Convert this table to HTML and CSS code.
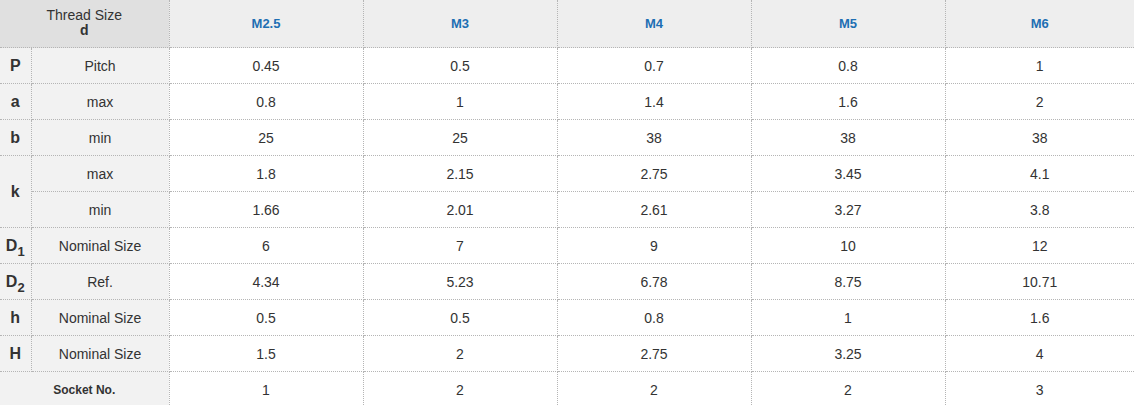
FILE: index.html
```html
<!DOCTYPE html>
<html>
<head>
<meta charset="utf-8">
<link rel="stylesheet" href="styles.css">
</head>
<body>
<table class="spec">
  <colgroup>
    <col class="c-sym"><col class="c-lbl">
    <col class="c-v"><col class="c-v"><col class="c-v"><col class="c-v"><col class="c-last">
  </colgroup>
  <thead>
    <tr>
      <th colspan="2" class="corner">Thread Size<br><b>d</b></th>
      <th class="size">M2.5</th><th class="size">M3</th><th class="size">M4</th><th class="size">M5</th><th class="size">M6</th>
    </tr>
  </thead>
  <tbody>
    <tr><td class="sym">P</td><td class="lbl">Pitch</td><td>0.45</td><td>0.5</td><td>0.7</td><td>0.8</td><td>1</td></tr>
    <tr><td class="sym">a</td><td class="lbl">max</td><td>0.8</td><td>1</td><td>1.4</td><td>1.6</td><td>2</td></tr>
    <tr><td class="sym">b</td><td class="lbl">min</td><td>25</td><td>25</td><td>38</td><td>38</td><td>38</td></tr>
    <tr><td class="sym" rowspan="2">k</td><td class="lbl">max</td><td>1.8</td><td>2.15</td><td>2.75</td><td>3.45</td><td>4.1</td></tr>
    <tr><td class="lbl">min</td><td>1.66</td><td>2.01</td><td>2.61</td><td>3.27</td><td>3.8</td></tr>
    <tr><td class="sym">D<sub>1</sub></td><td class="lbl">Nominal Size</td><td>6</td><td>7</td><td>9</td><td>10</td><td>12</td></tr>
    <tr><td class="sym">D<sub>2</sub></td><td class="lbl">Ref.</td><td>4.34</td><td>5.23</td><td>6.78</td><td>8.75</td><td>10.71</td></tr>
    <tr><td class="sym">h</td><td class="lbl">Nominal Size</td><td>0.5</td><td>0.5</td><td>0.8</td><td>1</td><td>1.6</td></tr>
    <tr><td class="sym">H</td><td class="lbl">Nominal Size</td><td>1.5</td><td>2</td><td>2.75</td><td>3.25</td><td>4</td></tr>
    <tr><td class="lbl socket" colspan="2">Socket No.</td><td>1</td><td>2</td><td>2</td><td>2</td><td>3</td></tr>
  </tbody>
</table>
</body>
</html>
```

FILE: styles.css
```css
html, body {
  margin: 0;
  padding: 0;
  background: #fff;
}
.spec {
  border-collapse: collapse;
  table-layout: fixed;
  width: 1134px;
  font-family: "Liberation Sans", Arial, sans-serif;
  font-size: 14px;
  color: #333;
}
.c-sym { width: 31px; }
.c-lbl { width: 138px; }
.c-v { width: 194px; }
.c-last { width: 189px; }
.spec th, .spec td {
  border: 1px dotted #b5b5b5;
  text-align: center;
  vertical-align: middle;
  padding: 0;
  height: 35px;
  line-height: 16px;
}
.spec tr:first-child th { border-top: none; }
.spec tr th:first-child, .spec tr td:first-child { border-left: none; }
.spec tr th:last-child, .spec tr td:last-child { border-right: none; }
.spec tbody tr:last-child td { border-bottom: none; }
.spec thead th {
  height: 47px;
  background: #eeeeee;
  font-weight: normal;
}
.spec th.corner {
  background: #e0e0e0;
  font-size: 14px;
  line-height: 15px;
  height: 45px;
  padding-bottom: 2px;
}
.spec th.size {
  color: #1d6fb3;
  font-weight: bold;
  font-size: 13px;
}
.spec td.sym {
  background: #f2f2f2;
  font-weight: bold;
  font-size: 16px;
  color: #333;
}
.spec td.sym sub {
  font-size: 13px;
  vertical-align: -5px;
  line-height: 0;
}
.spec td.lbl {
  background: #f2f2f2;
}
.spec td.socket {
  font-weight: bold;
  font-size: 12px;
}
```
